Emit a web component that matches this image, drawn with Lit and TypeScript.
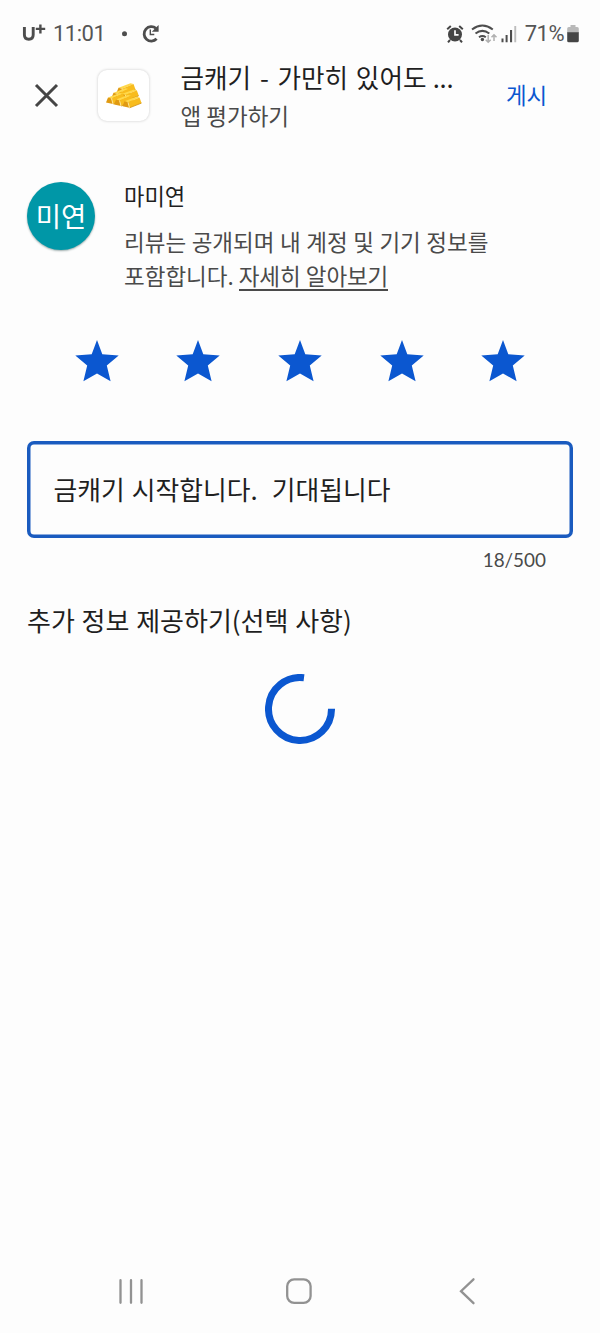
import { LitElement, html, css, svg } from "lit";
import { customElement, state } from "lit/decorators.js";

@customElement("status-bar")
class StatusBar extends LitElement {
  static styles = css`
    :host { display: flex; height: 57px; padding: 10px 21px 0 22px; box-sizing: border-box; justify-content: space-between;
      font-family: Roboto, sans-serif; font-size: 22px; color: #555; }
    .side { display: flex; height: 47px; align-items: center; }
    svg { display: block; flex: none; }
    .time { margin-left: 7px; letter-spacing: -0.5px; }
    .pct { margin: 0 3px 0 7px; letter-spacing: -0.5px; }
  `;
  render() {
    return html`
      <div class="side">
        <svg width="24" height="26" viewBox="0 0 24 26" fill="none" stroke="#4d4d4d">
          <path d="M2.4 6v7.7q0 4.5 4.4 4.5t4.4-4.5V6" stroke-width="2.9" />
          <path d="M18.4 3.4v9M13.8 7.9h9.4" stroke-width="2.4" />
        </svg>
        <span class="time">11:01</span>
        <svg width="60" height="26" viewBox="0 0 60 26" fill="none" stroke="#4d4d4d">
          <circle cx="19.500" cy="12.700" r="2.500" fill="#4d4d4d" stroke="none" />
          <path d="M51.600 17.800A7.200 7.200 0 1 1 51 7.400" stroke-width="2.800" />
          <path d="M53.600 4v6.800h-6.800z" fill="#4d4d4d" stroke="none" />
          <path d="M45.300 8.500v5h4" stroke-width="1.400" />
        </svg>
      </div>
      <div class="side">
        <svg width="18" height="20" viewBox="0 0 18 20" fill="none" stroke="#454545">
          <circle cx="9" cy="10.500" r="7" fill="#454545" stroke="none" />
          <path d="M1.200 5.200 4.800 2M16.800 5.200 13.200 2M4 16l-2 2.300M14 16l2 2.300" stroke-width="2" />
          <path d="M9 6.200v4.600h3.600" stroke="#fdfdfd" stroke-width="1.700" />
        </svg>
        <svg width="36" height="20" viewBox="0 0 36 20" fill="none" stroke="#4d4d4d" stroke-width="2">
          <path d="M8 5.500Q18.400-2.400 28.800 5.500M11.500 9.500Q18.400 4.300 25.300 9.500M15 13.200Q18.400 10.800 21.800 13.200" />
          <circle cx="18.400" cy="15.500" r="1.700" fill="#4d4d4d" stroke="none" />
          <path d="M24.200 11v7M21.700 15.800l2.500 2.500 2.500-2.500M30 17v-6M27.500 13.200l2.500-2.500 2.500 2.500" stroke="#b0b0b0" stroke-width="1.500" />
        </svg>
        <svg width="18" height="20" viewBox="0 0 18 20" fill="#4d4d4d">
          <path d="M1.500 14.500h2v3.700h-2zM5.600 11h2v7.200h-2zM10 6h2.100v12.200H10z" />
          <path d="M14.300 2h1.900v16.200h-1.900z" fill="#bdbdbd" />
        </svg>
        <span class="pct">71%</span>
        <svg width="12" height="20" viewBox="0 0 12 20">
          <path d="M3.500 1h5v2h1.700q1.600 0 1.600 1.600V9H.2V4.600Q.2 3 1.800 3h1.700z" fill="#b9b9b9" />
          <path d="M.2 8.300h11.600v8.400q0 1.600-1.600 1.600H1.800q-1.600 0-1.600-1.600z" fill="#454545" />
        </svg>
      </div>`;
  }
}

@customElement("gold-icon")
class GoldIcon extends LitElement {
  static styles = css`
    :host { display: flex; width: 51px; height: 51px; box-sizing: border-box; border-radius: 9px; background: #fff;
      box-shadow: 0 0 3px #c9c9c9; align-items: center; justify-content: center; }
  `;
  bar(x: number, y: number) {
    return svg`<g transform="translate(${x} ${y})">
      <path d="M2 0 14-4.600 17-3.800 5.500 1z" fill="#ffd84a" />
      <path d="M5.500 1 17-3.800 19 1.800 7 6.500z" fill="#f8bc1d" />
      <path d="M7 6.500 19 1.800" stroke="#d28f0b" stroke-width=".8" />
      <path d="M2 0 5.500 1 7 6.500 0 5z" fill="#e09a12" />
      <path d="M5.500 1 7 6.500" stroke="#ffe99c" stroke-width=".9" />
    </g>`;
  }
  render() {
    return html`<svg width="38" height="28" viewBox="0 0 38 28">
      ${this.bar(11.5, 5.8)}${this.bar(6.5, 10.8)}${this.bar(14.8, 12)}
      ${this.bar(1, 15.500)}${this.bar(9, 17.500)}${this.bar(17.500, 19.300)}
    </svg>`;
  }
}

@customElement("nav-bar")
class NavBar extends LitElement {
  static styles = css`
    :host { display: flex; height: 84px; padding: 0 122px 0 115px; box-sizing: border-box; align-items: center; }
    .home { margin-left: 136px; }
    .back { margin-left: auto; }
  `;
  render() {
    return html`
      <svg width="32" height="30" fill="none" stroke="#929292" stroke-width="2.300" stroke-linecap="round"><path d="M5.500 4.200v22.600M16 4.200v22.600M26.500 4.200v22.600" /></svg>
      <svg class="home" width="32" height="30" fill="none" stroke="#929292" stroke-width="2.300"><rect x="4.200" y="3.300" width="23.400" height="23.600" rx="7" /></svg>
      <svg class="back" width="22" height="30" fill="none" stroke="#929292" stroke-width="2.300" stroke-linecap="round"><path d="M17.500 3.300 5 15.200l12.500 12" /></svg>`;
  }
}

@customElement("app-root")
class AppRoot extends LitElement {
  @state() review = "금캐기 시작합니다.  기대됩니다";
  @state() rating = 5;

  static styles = css`
    :host { display: flex; flex-direction: column; height: 1333px; background: #fdfdfd; color: #1f1f1f; overflow: hidden;
      font-family: "Noto Sans CJK KR", sans-serif; }
    header { display: flex; height: 76px; padding-left: 34px; align-items: center; flex: none; }
    .close { flex: none; width: 25px; height: 25px; margin-top: 1px; }
    gold-icon { margin: 1px 0 0 39px; flex: none; }
    .heading { width: 290px; margin: 2px 0 0 31.5px; white-space: nowrap; }
    .title { font-size: 25.6px; line-height: 38px; word-spacing: 2px; }
    .dash { padding: 0 1px; }
    .dots { margin-left: -1.5px; letter-spacing: -0.3px; }
    .sub { font-size: 22.5px; line-height: 38px; color: #4a4a4a; }
    .post { margin: -2px 0 0 35.5px; font-size: 22.4px; line-height: 38px; color: #0b57d0; }
    .author { display: flex; padding: 46px 27px 0; }
    .avatar { display: flex; width: 68px; height: 68px; margin-top: 3px; padding-bottom: 3px; box-sizing: border-box; border-radius: 50%; background: #0097a7; color: #fff;
      align-items: center; justify-content: center; font-size: 27.5px; box-shadow: 0 1px 2px #9aa; flex: none; }
    .info { margin-left: 29px; white-space: nowrap; }
    .name { font-size: 22.2px; line-height: 32px; }
    .note { margin-top: 14px; font-size: 22.5px; line-height: 33.5px; color: #4a4a4a; word-spacing: 0.5px; }
    .more { border-bottom: 2px solid #4a4a4a; display: inline-block; line-height: 28px; margin-left: -0.5px; letter-spacing: -0.15px; }
    .stars { display: flex; margin: 48px 46px 0; }
    .star { display: flex; flex: 1; justify-content: center; }
    .field { display: flex; height: 97px; margin: 58.5px 27px 0; padding: 0 26.5px 2px; box-sizing: border-box; box-shadow: inset 0 0 0 3.5px #1a5bbf; border-radius: 7px;
      align-items: center; font-size: 25.8px; white-space: pre; word-spacing: 1.3px; flex: none; }
    .count { margin: 9px 54px 0 0; text-align: right; font: 18.9px/26px Lato, sans-serif; color: #4a4a4a; }
    .extra { margin: 28.5px 27px 0; font-size: 26px; line-height: 38px; white-space: nowrap; word-spacing: 0.9px; }
    .spinner { display: flex; justify-content: center; margin-top: 35px; }
    nav-bar { margin-top: auto; }
  `;

  render() {
    return html`
      <status-bar></status-bar>
      <header>
        <svg class="close" viewBox="0 0 25 25" stroke="#454545" stroke-width="3"><path d="M2 2 23 23M23 2 2 23" /></svg>
        <gold-icon></gold-icon>
        <div class="heading">
          <div class="title">금캐기 <span class="dash">-</span> 가만히 있어도 <span class="dots">...</span></div>
          <div class="sub">앱 평가하기</div>
        </div>
        <div class="post">게시</div>
      </header>
      <section class="author">
        <div class="avatar">미연</div>
        <div class="info">
          <div class="name">마미연</div>
          <div class="note">리뷰는 공개되며 내 계정 및 기기 정보를<br />포함합니다. <span class="more">자세히 알아보기</span></div>
        </div>
      </section>
      <div class="stars">
        ${Array.from({ length: this.rating }, () => html`<div class="star">
          <svg width="44" height="42" viewBox="0 0 44 42" fill="#0b57d0"><path d="M22 0 27.3 14.2 43.7 15.5 31.8 25.5 35.6 41.2 22 33.4 8.4 41.2 12.2 25.5.3 15.5 16.7 14.2z" /></svg>
        </div>`)}
      </div>
      <div class="field">${this.review}</div>
      <div class="count">18/500</div>
      <div class="extra">추가 정보 제공하기(선택 사항)</div>
      <div class="spinner">
        <svg width="70" height="70" viewBox="0 0 70 70" fill="none" stroke="#0b57d0" stroke-width="7"><path d="M39 3.75A31.5 31.5 0 1 0 66.5 34.7" /></svg>
      </div>
      <nav-bar></nav-bar>`;
  }
}
